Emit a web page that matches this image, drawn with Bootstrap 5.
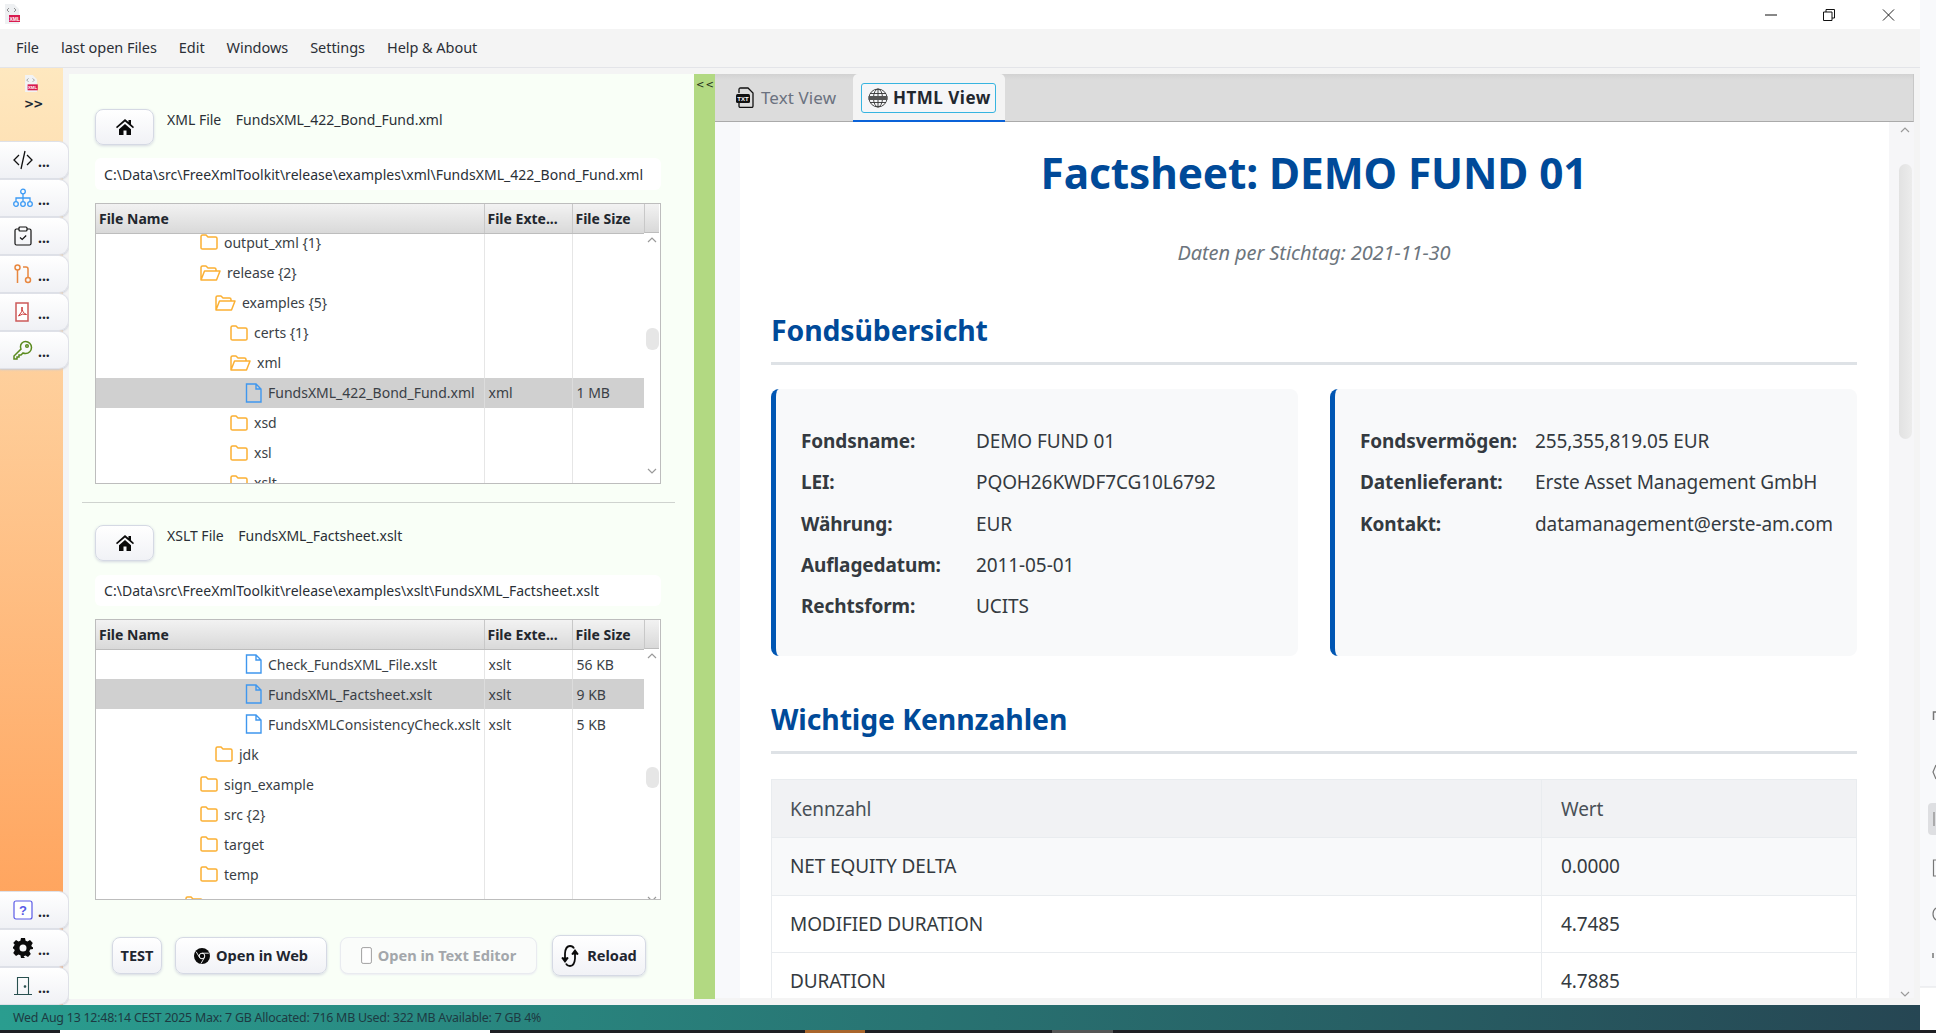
<!DOCTYPE html>
<html lang="en">
<head>
<meta charset="utf-8">
<title>FreeXmlToolkit</title>
<link href="https://cdn.jsdelivr.net/npm/bootstrap@5.3.0/dist/css/bootstrap.min.css" rel="stylesheet">
<style>
html,body{height:100%;margin:0;overflow:hidden;background:#fff}
body{font-family:"Noto Sans",sans-serif;font-size:14px;color:#2a2f36}
.shell{width:1936px;height:1033px}
.win{width:1920px}
.strip{width:16px;height:1023px;background:#f8f9fb}
.taskbar{height:3px;background:#1e1f23}
.tb-a{width:60px}.tb-b{width:430px;background:#fff}.tb-c{width:315px}.tb-d{width:60px;background:#a9652b}.tb-e{width:187px}.tb-f{width:61px;background:#555}
.titlebar{height:29px;background:#fff}
.app-logo{margin:4px 0 0 4px}
.wc{width:12px;height:12px;display:block}
.wc-min{margin-right:46px}.wc-max{margin-right:47px}.wc-close{margin-right:25px;width:13px}
.menubar{height:39px;background:#f4f4f4;border-bottom:1px solid #e3e4e8;padding-left:16px;gap:22px;font-size:14.5px;color:#2b2f36;letter-spacing:-.05px}
.mainrow{height:937px;background:#f4f4f4;min-height:0}
.sidebar{width:69px;background:linear-gradient(#fee8bf,#ff9c52) no-repeat left top/63px 100%}
.side-top{height:73px;padding-top:7px;padding-left:24px}
.gtgt{font-family:"DejaVu Sans",sans-serif;font-weight:700;font-size:12px;line-height:1;margin-top:6px;letter-spacing:-.8px;color:#1c2733}
.side-btn{height:38px;width:69px;background:linear-gradient(#fff,#f0f1f5);border:1px solid #dfe1e8;border-left:0;border-radius:0 10px 10px 0;box-shadow:0 1px 2px #c8ccd6;padding-left:13px;gap:5px;font-weight:700;font-size:14px;color:#1f2630;line-height:1}
.side-btn span{padding-top:4px}
.leftpane{width:625px;height:925px;margin:6px 0;background:#f9fff7;padding-left:13px;padding-right:19px}
.inner{margin:0 14px 0 13px}
.home-btn{width:59px;height:36px;padding:0;border-radius:8px;background:linear-gradient(#fff,#f1f2f6);border:1px solid #d5d9e4;box-shadow:0 1px 3px #d4d8e0}
.file-top{padding-top:35px}
.file-label{margin:1px 0 0 13px;line-height:20px;white-space:pre}
.path-box{height:32px;margin-top:13px;background:#fff;border-radius:6px;padding-left:9px;white-space:nowrap;letter-spacing:.03px}
.path-2{height:31px;margin-top:14px}
.tree{height:281px;margin-top:13px;border:1px solid #bdbdbd;background:#fff;overflow:hidden}
.tree-main{width:548px;overflow:hidden}
.tree .table{width:548px;table-layout:fixed;margin:0;--bs-table-bg:transparent;font-size:14px}
.tree .table th{height:29px;padding:1px 0 0 3px;background:linear-gradient(#f2f2f2,#d9d9d9);border-bottom:1px solid #bdbdbd;border-right:1px solid #c8c8c8;font-weight:700;vertical-align:middle;color:#22272e;white-space:nowrap;overflow:hidden}
.tree .table td{height:30px;padding:0 0 0 4px;border:0;border-right:1px solid #e6e6e6;vertical-align:middle;white-space:nowrap;color:#3a3f46}
.tree .table th:last-child,.tree .table td:last-child{border-right:0}
.tree .table .sel td{background:#d0d0d0;border-right-color:#dcdcdc}
.tree .table .peek td{height:24px;padding-bottom:5px}
.tree .table .peek .cell-in{margin-top:-2px}
.c1{width:388px}.c2{width:88px}.c3{width:72px}
.cell-in{gap:6px}
.tree .table td.i0{padding-left:89px}.tree .table td.i1{padding-left:104px}.tree .table td.i2{padding-left:119px}.tree .table td.i3{padding-left:134px}.tree .table td.i4{padding-left:149px}
.tree-sb{width:16px;background:#fff}
.sb-head{height:29px;background:linear-gradient(#f2f2f2,#d9d9d9);border-bottom:1px solid #bdbdbd;border-left:1px solid #c8c8c8;width:15px}
.arr{width:16px;height:10px;display:block}
.sb-up{margin-top:2px}
.thumb-a{width:13px;height:22px;margin:83px 0 0 2px;background:#e6e6e6;border-radius:6px}
.thumb-b{width:13px;height:21px;margin:106px 0 0 2px;background:#e6e6e6;border-radius:6px}
.sb-dn{margin-top:116px}
.sb-dn2{margin-top:106px}
.divline{height:1px;background:#cfd3cf;margin-top:18px}
.mt-22{margin-top:22px}
.bt-row{margin-top:35px;padding-left:17px;height:41px}
.act{height:37px;padding:0;border-radius:8px;background:linear-gradient(#fff,#f1f2f6);border:1px solid #d5d9e4;box-shadow:0 1px 3px #d4d8e0;font-weight:700;font-size:14.6px;color:#1f2630;gap:6px}
.act-test{width:50px;margin-right:13px}
.act-web{width:152px;margin-right:13px}
.act-txt{width:197px;margin-right:15px;--bs-btn-disabled-opacity:1;--bs-btn-disabled-color:#a3a7ab;--bs-btn-disabled-border-color:#e9ebf0;--bs-btn-disabled-bg:#fafcfa;box-shadow:0 1px 2px #eceef2;background:#fafcfa}
.act-reload{width:94px;height:41px;gap:8px}
.splitter{width:21px;height:925px;margin-top:6px;background:#b2d982;font-size:10px;line-height:1;padding:6px 0 0 2px;color:#24301a;letter-spacing:1px;font-family:"DejaVu Sans",sans-serif}
.rightpane{width:1199px;height:924px;margin-top:6px}
.tabbar{height:48px;background:linear-gradient(#d2d2d2,#dcdcdc 6px);border-bottom:1px solid #aaa;border-right:1px solid #c8c8c8}
.tab-off{width:138px;padding-left:21px;gap:6px;font-size:17px;letter-spacing:.1px;color:#6b7280}
.tab-on{width:152px;height:48px;background:#f4f4f4;border-bottom:2px solid #0a62d8;border-radius:5px 5px 0 0;padding:9px 9px 0 8px}
.tab-focus{height:30px;border:1.5px solid #36b4e0;border-radius:3px;padding-left:6px;gap:5px;font-weight:700;font-size:17px;color:#22272e;letter-spacing:.5px;background:#f5f6f8;white-space:nowrap}
.view{height:876px;min-height:0;overflow:hidden}
.gut{width:25px;background:#f8f9fb}
.doc{width:1149px;background:#fff;padding:24px 32px 0 31px;overflow:hidden}
.doc-title{font-size:42.4px;font-weight:700;line-height:53px;color:#004a99;margin:0;text-align:center;letter-spacing:-.1px}
.doc-sub{margin-top:39px;font-size:20px;line-height:29px;font-style:italic;color:#6c757d;text-align:center;letter-spacing:-.1px}
.doc-h2{font-size:28.4px;font-weight:700;line-height:35px;color:#004a99;margin:46px 0 0;padding-bottom:14px;border-bottom:3px solid #dee2e6;letter-spacing:-.1px}
.h2-b{margin-top:46px}
.cardline{gap:32px;margin-top:24px}
.info{width:527px;height:267px;background:#f8f9fa;border-left:5px solid #0056b3;border-radius:8px;padding:32px 0 0 25px;font-size:19px;color:#343a40;letter-spacing:-.1px}
.info-row{height:41.3px;line-height:41.3px;white-space:nowrap}
.info-l{width:175px;font-weight:700}
.kz{margin-top:25px;width:1086px;table-layout:fixed;--bs-table-border-color:#e9ecef;font-size:19px;letter-spacing:-.1px;color:#343a40}
.kz>*>tr>*{height:57.5px;padding:0 0 0 19px;vertical-align:middle;border-width:1px}
.kz>*>tr>*:first-child{padding-left:18px}
.kz thead th{height:58px;padding-top:1px;font-weight:400;background:#f1f2f4;color:#495057}
.kz .kz-s td{background:#f8f9fa}
.kz-w{width:315px}
.vsb{width:25px;background:#f6f6f8}
.vsb-up{margin-top:3px;margin-left:8px}
.vthumb{width:13px;height:275px;margin:29px 0 0 10px;background:linear-gradient(90deg,#e2e2e2,#ececec);border-radius:7px}
.vsb-dn{margin-top:550px;margin-left:8px}
.status{height:25px;background:linear-gradient(90deg,#2a9d8f,#264653);font-size:12.4px;line-height:25px;padding-left:13px;color:#1d3a42;letter-spacing:-.22px}
</style>
</head>
<body>
<div class="shell d-flex flex-column">
 <div class="d-flex flex-grow-1">
  <div class="win d-flex flex-column">
   <div class="titlebar d-flex justify-content-between align-items-center">
    <svg class="app-logo align-self-start" width="16" height="20" viewBox="0 0 16 20"><path d="M1 0h9l5 5v15H1z" fill="#eef0f2"/><path d="M5 4L3 6l2 2M10 4l2 2-2 2" stroke="#777" fill="none" stroke-width=".8"/><rect x="5" y="11" width="11" height="7" fill="#d81b50"/><text x="5.500" y="16.500" font-size="5" font-weight="700" fill="#fff" font-family="Liberation Sans">XML</text></svg>
    <div class="d-flex align-items-center">
     <svg class="wc wc-min" viewBox="0 0 12 12"><path d="M0 6h12" stroke="#111" stroke-width="1"/></svg>
     <svg class="wc wc-max" viewBox="0 0 12 12"><path d="M.5 3h8.500v8.500h-8.500zM3 3V.5h8.500V9H9" stroke="#111" fill="none"/></svg>
     <svg class="wc wc-close" viewBox="0 0 13 13"><path d="M.5.5l12 12M12.500.5l-12 12" stroke="#111" fill="none"/></svg>
    </div>
   </div>
   <div class="menubar d-flex align-items-center"><span>File</span><span>last open Files</span><span>Edit</span><span>Windows</span><span>Settings</span><span>Help &amp; About</span></div>
   <div class="mainrow d-flex">
    <div class="sidebar d-flex flex-column flex-shrink-0">
     <div class="side-top">
      <svg class="d-block" width="14" height="17" viewBox="0 0 16 20"><path d="M1 0h9l5 5v15H1z" fill="#f2f3f4"/><path d="M5 4L3 6l2 2M10 4l2 2-2 2" stroke="#777" fill="none" stroke-width=".8"/><rect x="4" y="11" width="12" height="7" fill="#d81b50"/><text x="4.500" y="16.500" font-size="5" font-weight="700" fill="#fff" font-family="Liberation Sans">XML</text></svg>
      <div class="gtgt">&gt;&gt;</div>
     </div>
     <div class="side-btn d-flex align-items-center"><svg width="20" height="20" viewBox="0 0 20 20"><path d="M6 5L1 10l5 5M14 5l5 5-5 5M12 1L8 19" stroke="#111" fill="none" stroke-width="1.300"/></svg><span>...</span></div>
     <div class="side-btn d-flex align-items-center"><svg width="20" height="20" viewBox="0 0 20 20" fill="none" stroke="#3b9af5" stroke-width="1.300"><circle cx="10" cy="3.500" r="2.300"/><circle cx="3" cy="16" r="2.300"/><circle cx="10" cy="16" r="2.300"/><circle cx="17" cy="16" r="2.300"/><path d="M10 6v7M3 13.500V10h14v3.500"/></svg><span>...</span></div>
     <div class="side-btn d-flex align-items-center"><svg width="20" height="20" viewBox="0 0 20 20" fill="none" stroke="#111" stroke-width="1.200"><path d="M6 3H3.500Q2 3 2 4.500v13Q2 19 3.500 19h13q1.500 0 1.500-1.500v-13Q18 3 16.500 3H14"/><rect x="6" y="1" width="8" height="4" rx="1"/><path d="M7 11.500l2.200 2 4-4"/></svg><span>...</span></div>
     <div class="side-btn d-flex align-items-center"><svg width="20" height="20" viewBox="0 0 20 20" fill="none" stroke="#e8873f" stroke-width="1.500"><circle cx="4.500" cy="3.500" r="2.500"/><circle cx="15" cy="16" r="2.500"/><path d="M4.500 6v13M10 3h3q2 0 2 2v8.500"/></svg><span>...</span></div>
     <div class="side-btn d-flex align-items-center"><svg width="20" height="20" viewBox="0 0 20 20"><rect x="3" y="1" width="12" height="18" fill="#fff" stroke="#cc5a5a" stroke-width="1.500"/><path d="M9 5q1 5-3.500 9 4-3 8-1.500Q9 11 9 5z" fill="none" stroke="#cc3a3a"/></svg><span>...</span></div>
     <div class="side-btn d-flex align-items-center"><svg width="20" height="20" viewBox="0 0 20 20" fill="none" stroke="#5a8a1e" stroke-width="1.500"><path d="M12.500 1.500a6 6 0 0 1 0 12q-1.500 0-2.500-.5L8 15H6v2H4v2H1v-3l7-7q-.5-1-.5-2.500a5 5 0 0 1 5-5z"/><circle cx="14" cy="6" r="1.300"/></svg><span>...</span></div>
     <div class="flex-grow-1"></div>
     <div class="side-btn d-flex align-items-center"><svg width="20" height="20" viewBox="0 0 20 20"><rect x="1" y="1" width="18" height="18" rx="2" fill="#fff" stroke="#5a5ae6" stroke-width="1.200"/><text x="10" y="15" text-anchor="middle" font-size="13" font-weight="700" fill="#5a5ae6" font-family="Liberation Sans">?</text></svg><span>...</span></div>
     <div class="side-btn d-flex align-items-center"><svg width="20" height="20" viewBox="0 0 20 20"><path fill="#0b0b0b" fill-rule="evenodd" d="M8 0h4l.6 2.800 1.900.8L17 2l2.800 3-1.500 2.400.8 1.900L20 9v2l-2.900.6-.8 1.900 1.500 2.500-2.800 2.900-2.500-1.500-1.900.8L12 20H8l-.6-2.800-1.900-.8L3 18 .2 15l1.500-2.500-.8-1.900L0 11V9l.9-.7.8-1.900L.2 5 3 2l2.500 1.600 1.900-.8zM10 6.500a3.500 3.500 0 1 0 0 7 3.500 3.500 0 0 0 0-7z"/></svg><span>...</span></div>
     <div class="side-btn d-flex align-items-center"><svg width="20" height="20" viewBox="0 0 20 20" fill="none" stroke="#28504f" stroke-width="1.100"><path d="M4.500 18.500V1.500h11v17M1 18.500h18"/><circle cx="12" cy="10.500" r=".8" fill="#28504f"/></svg><span>...</span></div>
    </div>
    <div class="leftpane flex-shrink-0">
     <div class="inner">
      <div class="d-flex file-top">
       <button class="btn home-btn d-flex align-items-center justify-content-center" type="button"><svg width="18" height="16" viewBox="0 0 18 16"><path fill="#0a0a0a" d="M9 0L0 8l1 1.200L9 2.400l8 6.800L18 8l-3-2.700V1h-2.500v2.100zM3 10.200V16h4.500v-4.500h3V16H15v-5.800L9 5z"/></svg></button>
       <div class="file-label">XML File    FundsXML_422_Bond_Fund.xml</div>
      </div>
      <div class="path-box d-flex align-items-center">C:\Data\src\FreeXmlToolkit\release\examples\xml\FundsXML_422_Bond_Fund.xml</div>
      <div class="tree d-flex">
       <div class="tree-main">
        <table class="table">
         <colgroup><col class="c1"><col class="c2"><col class="c3"></colgroup>
         <thead><tr><th>File Name</th><th>File Exte...</th><th>File Size</th></tr></thead>
         <tbody>
          <tr class="peek"><td class="i1"><div class="d-flex align-items-center cell-in"><svg class="ic-f" width="18" height="16" viewBox="0 0 18 16"><path d="M1 14V2.500Q1 1 2.500 1H6l2 2h7.500Q17 3 17 4.500V14q0 1-1.500 1h-13Q1 15 1 14z" fill="none" stroke="#fbb033" stroke-width="1.500"/></svg>output_xml {1}</div></td><td></td><td></td></tr>
          <tr><td class="i1"><div class="d-flex align-items-center cell-in"><svg width="21" height="16" viewBox="0 0 21 16"><path d="M1 15V2.500Q1 1 2.500 1H6l2 2h6.500Q16 3 16 4.500V6M1 15l3.500-9H20l-3.500 9z" fill="none" stroke="#fbb033" stroke-width="1.500" stroke-linejoin="round"/></svg>release {2}</div></td><td></td><td></td></tr>
          <tr><td class="i2"><div class="d-flex align-items-center cell-in"><svg width="21" height="16" viewBox="0 0 21 16"><path d="M1 15V2.500Q1 1 2.500 1H6l2 2h6.500Q16 3 16 4.500V6M1 15l3.500-9H20l-3.500 9z" fill="none" stroke="#fbb033" stroke-width="1.500" stroke-linejoin="round"/></svg>examples {5}</div></td><td></td><td></td></tr>
          <tr><td class="i3"><div class="d-flex align-items-center cell-in"><svg width="18" height="16" viewBox="0 0 18 16"><path d="M1 14V2.500Q1 1 2.500 1H6l2 2h7.500Q17 3 17 4.500V14q0 1-1.500 1h-13Q1 15 1 14z" fill="none" stroke="#fbb033" stroke-width="1.500"/></svg>certs {1}</div></td><td></td><td></td></tr>
          <tr><td class="i3"><div class="d-flex align-items-center cell-in"><svg width="21" height="16" viewBox="0 0 21 16"><path d="M1 15V2.500Q1 1 2.500 1H6l2 2h6.500Q16 3 16 4.500V6M1 15l3.500-9H20l-3.500 9z" fill="none" stroke="#fbb033" stroke-width="1.500" stroke-linejoin="round"/></svg>xml</div></td><td></td><td></td></tr>
          <tr class="sel"><td class="i4"><div class="d-flex align-items-center cell-in"><svg width="17" height="20" viewBox="0 0 17 20"><path d="M1.500 19V1h9.500l5 5v13z M11 1v5h5" fill="none" stroke="#3f97ee" stroke-width="1.400"/></svg>FundsXML_422_Bond_Fund.xml</div></td><td>xml</td><td>1 MB</td></tr>
          <tr><td class="i3"><div class="d-flex align-items-center cell-in"><svg width="18" height="16" viewBox="0 0 18 16"><path d="M1 14V2.500Q1 1 2.500 1H6l2 2h7.500Q17 3 17 4.500V14q0 1-1.500 1h-13Q1 15 1 14z" fill="none" stroke="#fbb033" stroke-width="1.500"/></svg>xsd</div></td><td></td><td></td></tr>
          <tr><td class="i3"><div class="d-flex align-items-center cell-in"><svg width="18" height="16" viewBox="0 0 18 16"><path d="M1 14V2.500Q1 1 2.500 1H6l2 2h7.500Q17 3 17 4.500V14q0 1-1.500 1h-13Q1 15 1 14z" fill="none" stroke="#fbb033" stroke-width="1.500"/></svg>xsl</div></td><td></td><td></td></tr>
          <tr><td class="i3"><div class="d-flex align-items-center cell-in"><svg width="18" height="16" viewBox="0 0 18 16"><path d="M1 14V2.500Q1 1 2.500 1H6l2 2h7.500Q17 3 17 4.500V14q0 1-1.500 1h-13Q1 15 1 14z" fill="none" stroke="#fbb033" stroke-width="1.500"/></svg>xslt</div></td><td></td><td></td></tr>
         </tbody>
        </table>
       </div>
       <div class="tree-sb">
        <div class="sb-head"></div>
        <svg class="arr sb-up" viewBox="0 0 16 10"><path d="M4 7l4-4 4 4" stroke="#9a9a9a" fill="none" stroke-width="1.200"/></svg>
        <div class="thumb-a"></div>
        <svg class="arr sb-dn" viewBox="0 0 16 10"><path d="M4 3l4 4 4-4" stroke="#9a9a9a" fill="none" stroke-width="1.200"/></svg>
       </div>
      </div>
     </div>
     <div class="divline"></div>
     <div class="inner">
      <div class="d-flex mt-22">
       <button class="btn home-btn d-flex align-items-center justify-content-center" type="button"><svg width="18" height="16" viewBox="0 0 18 16"><path fill="#0a0a0a" d="M9 0L0 8l1 1.200L9 2.400l8 6.800L18 8l-3-2.700V1h-2.500v2.100zM3 10.200V16h4.500v-4.500h3V16H15v-5.800L9 5z"/></svg></button>
       <div class="file-label">XSLT File    FundsXML_Factsheet.xslt</div>
      </div>
      <div class="path-box path-2 d-flex align-items-center">C:\Data\src\FreeXmlToolkit\release\examples\xslt\FundsXML_Factsheet.xslt</div>
      <div class="tree d-flex">
       <div class="tree-main">
        <table class="table">
         <colgroup><col class="c1"><col class="c2"><col class="c3"></colgroup>
         <thead><tr><th>File Name</th><th>File Exte...</th><th>File Size</th></tr></thead>
         <tbody>
          <tr><td class="i4"><div class="d-flex align-items-center cell-in"><svg width="17" height="20" viewBox="0 0 17 20"><path d="M1.500 19V1h9.500l5 5v13z M11 1v5h5" fill="none" stroke="#3f97ee" stroke-width="1.400"/></svg>Check_FundsXML_File.xslt</div></td><td>xslt</td><td>56 KB</td></tr>
          <tr class="sel"><td class="i4"><div class="d-flex align-items-center cell-in"><svg width="17" height="20" viewBox="0 0 17 20"><path d="M1.500 19V1h9.500l5 5v13z M11 1v5h5" fill="none" stroke="#3f97ee" stroke-width="1.400"/></svg>FundsXML_Factsheet.xslt</div></td><td>xslt</td><td>9 KB</td></tr>
          <tr><td class="i4"><div class="d-flex align-items-center cell-in"><svg width="17" height="20" viewBox="0 0 17 20"><path d="M1.500 19V1h9.500l5 5v13z M11 1v5h5" fill="none" stroke="#3f97ee" stroke-width="1.400"/></svg>FundsXMLConsistencyCheck.xslt</div></td><td>xslt</td><td>5 KB</td></tr>
          <tr><td class="i2"><div class="d-flex align-items-center cell-in"><svg width="18" height="16" viewBox="0 0 18 16"><path d="M1 14V2.500Q1 1 2.500 1H6l2 2h7.500Q17 3 17 4.500V14q0 1-1.500 1h-13Q1 15 1 14z" fill="none" stroke="#fbb033" stroke-width="1.500"/></svg>jdk</div></td><td></td><td></td></tr>
          <tr><td class="i1"><div class="d-flex align-items-center cell-in"><svg width="18" height="16" viewBox="0 0 18 16"><path d="M1 14V2.500Q1 1 2.500 1H6l2 2h7.500Q17 3 17 4.500V14q0 1-1.500 1h-13Q1 15 1 14z" fill="none" stroke="#fbb033" stroke-width="1.500"/></svg>sign_example</div></td><td></td><td></td></tr>
          <tr><td class="i1"><div class="d-flex align-items-center cell-in"><svg width="18" height="16" viewBox="0 0 18 16"><path d="M1 14V2.500Q1 1 2.500 1H6l2 2h7.500Q17 3 17 4.500V14q0 1-1.500 1h-13Q1 15 1 14z" fill="none" stroke="#fbb033" stroke-width="1.500"/></svg>src {2}</div></td><td></td><td></td></tr>
          <tr><td class="i1"><div class="d-flex align-items-center cell-in"><svg width="18" height="16" viewBox="0 0 18 16"><path d="M1 14V2.500Q1 1 2.500 1H6l2 2h7.500Q17 3 17 4.500V14q0 1-1.500 1h-13Q1 15 1 14z" fill="none" stroke="#fbb033" stroke-width="1.500"/></svg>target</div></td><td></td><td></td></tr>
          <tr><td class="i1"><div class="d-flex align-items-center cell-in"><svg width="18" height="16" viewBox="0 0 18 16"><path d="M1 14V2.500Q1 1 2.500 1H6l2 2h7.500Q17 3 17 4.500V14q0 1-1.500 1h-13Q1 15 1 14z" fill="none" stroke="#fbb033" stroke-width="1.500"/></svg>temp</div></td><td></td><td></td></tr>
          <tr><td class="i0"><div class="d-flex align-items-center cell-in"><svg width="18" height="16" viewBox="0 0 18 16"><path d="M1 14V2.500Q1 1 2.500 1H6l2 2h7.500Q17 3 17 4.500V14q0 1-1.500 1h-13Q1 15 1 14z" fill="none" stroke="#fbb033" stroke-width="1.500"/></svg></div></td><td></td><td></td></tr>
         </tbody>
        </table>
       </div>
       <div class="tree-sb">
        <div class="sb-head"></div>
        <svg class="arr sb-up" viewBox="0 0 16 10"><path d="M4 7l4-4 4 4" stroke="#9a9a9a" fill="none" stroke-width="1.200"/></svg>
        <div class="thumb-b"></div>
        <svg class="arr sb-dn2" viewBox="0 0 16 10"><path d="M4 3l4 4 4-4" stroke="#9a9a9a" fill="none" stroke-width="1.200"/></svg>
       </div>
      </div>
      <div class="bt-row d-flex align-items-center">
       <button class="btn act act-test" type="button">TEST</button>
       <button class="btn act act-web d-flex align-items-center justify-content-center" type="button"><svg width="16" height="16" viewBox="0 0 16 16"><circle cx="8" cy="8" r="8" fill="#0b0b0b"/><circle cx="8" cy="8" r="2.800" fill="#0b0b0b" stroke="#fff"/><path d="M8 5.200h6.800M5.600 9.500L2.200 3.800M10.400 9.500l-3.400 6" stroke="#fff" stroke-width=".9"/></svg>Open in Web</button>
       <button class="btn act act-txt d-flex align-items-center justify-content-center" type="button" disabled><svg width="11" height="17" viewBox="0 0 11 17"><rect x=".6" y=".6" width="9.800" height="15.800" rx="1.500" fill="#fff" stroke="#a0a0a0"/></svg>Open in Text Editor</button>
       <button class="btn act act-reload d-flex align-items-center justify-content-center" type="button"><svg width="18" height="24" viewBox="0 0 18 24" fill="none" stroke="#0b0b0b" stroke-width="1.800"><path d="M13 4.500Q12 2 9 2 4.500 2 4 9.500V17"/><path d="M1 13.500l3 4 3-4" fill="#0b0b0b"/><path d="M5 19.500Q6 22 9 22q4.500 0 5-7.500V7"/><path d="M11 10.500l3-4 3 4" fill="#0b0b0b"/></svg>Reload</button>
      </div>
     </div>
    </div>
    <div class="splitter flex-shrink-0">&lt;&lt;</div>
    <div class="rightpane d-flex flex-column flex-shrink-0">
     <div class="tabbar d-flex">
      <div class="tab-off d-flex align-items-center"><svg width="19" height="21" viewBox="0 0 19 21"><path d="M3 6V2.500Q3 1 4.500 1H12l5 5v13q0 1.500-1.500 1.500h-11Q3 20.500 3 19v-3" fill="none" stroke="#111" stroke-width="1.300"/><rect x="0" y="7" width="14" height="9" rx="1.500" fill="#111"/><text x="7" y="14" text-anchor="middle" font-size="6" font-weight="700" fill="#fff" font-family="Liberation Sans">TXT</text></svg>Text View</div>
      <div class="tab-on">
       <div class="tab-focus d-flex align-items-center"><svg width="20" height="20" viewBox="0 0 20 20" fill="none" stroke="#333" stroke-width=".9"><circle cx="10" cy="10" r="9"/><ellipse cx="10" cy="10" rx="4.500" ry="9"/><path d="M2 5.500h16M2 14.500h16M10 1v18"/><rect x="0.500" y="8" width="19" height="4" fill="#555" stroke="none"/></svg>HTML View</div>
      </div>
     </div>
     <div class="view d-flex">
      <div class="gut flex-shrink-0"></div>
      <div class="doc flex-shrink-0">
       <h1 class="doc-title">Factsheet: DEMO FUND 01</h1>
       <div class="doc-sub">Daten per Stichtag: 2021-11-30</div>
       <h2 class="doc-h2">Fondsübersicht</h2>
       <div class="d-flex cardline">
        <div class="info">
         <div class="info-row d-flex"><span class="info-l">Fondsname:</span><span>DEMO FUND 01</span></div>
         <div class="info-row d-flex"><span class="info-l">LEI:</span><span>PQOH26KWDF7CG10L6792</span></div>
         <div class="info-row d-flex"><span class="info-l">Währung:</span><span>EUR</span></div>
         <div class="info-row d-flex"><span class="info-l">Auflagedatum:</span><span>2011-05-01</span></div>
         <div class="info-row d-flex"><span class="info-l">Rechtsform:</span><span>UCITS</span></div>
        </div>
        <div class="info">
         <div class="info-row d-flex"><span class="info-l">Fondsvermögen:</span><span>255,355,819.05 EUR</span></div>
         <div class="info-row d-flex"><span class="info-l">Datenlieferant:</span><span>Erste Asset Management GmbH</span></div>
         <div class="info-row d-flex"><span class="info-l">Kontakt:</span><span>datamanagement@erste-am.com</span></div>
        </div>
       </div>
       <h2 class="doc-h2 h2-b">Wichtige Kennzahlen</h2>
       <table class="table table-bordered kz">
        <colgroup><col><col class="kz-w"></colgroup>
        <thead><tr><th>Kennzahl</th><th>Wert</th></tr></thead>
        <tbody>
         <tr class="kz-s"><td>NET EQUITY DELTA</td><td>0.0000</td></tr>
         <tr><td>MODIFIED DURATION</td><td>4.7485</td></tr>
         <tr><td>DURATION</td><td>4.7885</td></tr>
        </tbody>
       </table>
      </div>
      <div class="vsb flex-shrink-0">
       <svg class="arr vsb-up" viewBox="0 0 16 10"><path d="M4 7l4-4 4 4" stroke="#9a9a9a" fill="none" stroke-width="1.200"/></svg>
       <div class="vthumb"></div>
       <svg class="arr vsb-dn" viewBox="0 0 16 10"><path d="M4 3l4 4 4-4" stroke="#9a9a9a" fill="none" stroke-width="1.200"/></svg>
      </div>
     </div>
    </div>
   </div>
   <div class="status">Wed Aug 13 12:48:14 CEST 2025 Max: 7 GB Allocated: 716 MB Used: 322 MB Available: 7 GB 4%</div>
  </div>
  <div class="strip flex-shrink-0">
   <svg width="16" height="1023" viewBox="0 0 16 1023" class="d-block"><rect x="0" y="0" width="16" height="1023" fill="#f8f9fb"/><rect x="0" y="987" width="16" height="36" fill="#fff"/><path d="M0 987h16" stroke="#e2e3e6"/><path d="M16 712h-2.500v8" stroke="#777" fill="none" stroke-width="1.500"/><path d="M16 765l-3 7 3 7" stroke="#777" fill="none" stroke-width="1.200"/><rect x="8" y="803" width="12" height="32" rx="4" fill="#dedfe2"/><path d="M14 812v14" stroke="#888" stroke-width="1.200"/><path d="M16 860h-2.500v16H16" stroke="#777" fill="none" stroke-width="1.200"/><path d="M16 908q-3 2-3 6t3 6" stroke="#777" fill="none" stroke-width="1.200"/><path d="M13 953v5" stroke="#777" stroke-width="1.500"/></svg>
  </div>
 </div>
 <div class="taskbar d-flex"><span class="tb-a"></span><span class="tb-b"></span><span class="tb-c"></span><span class="tb-d"></span><span class="tb-e"></span><span class="tb-f"></span></div>
</div>
<script src="https://cdn.jsdelivr.net/npm/bootstrap@5.3.0/dist/js/bootstrap.bundle.min.js"></script>
</body>
</html>
